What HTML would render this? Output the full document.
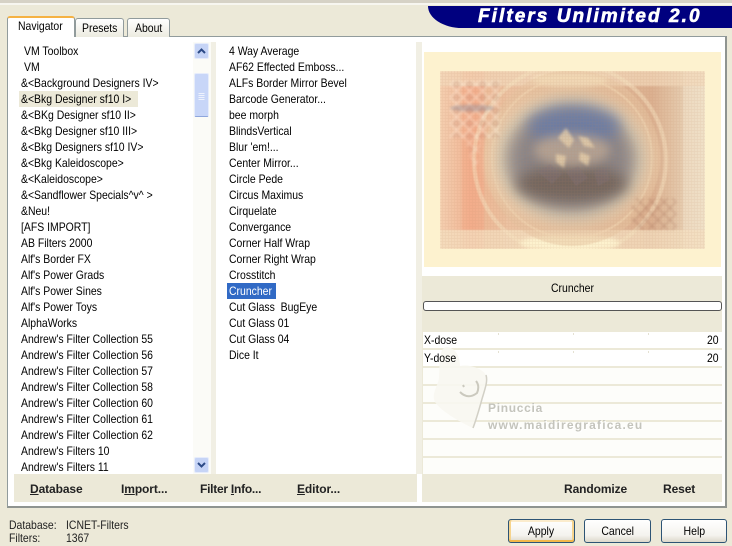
<!DOCTYPE html>
<html><head><meta charset="utf-8">
<style>
html,body{margin:0;padding:0}
body{width:732px;height:544px;position:relative;overflow:hidden;background:#ece9d8;font-family:"Liberation Sans",sans-serif;font-size:12px;color:#000}
div{position:absolute;box-sizing:border-box}
.t{white-space:nowrap;height:16px;line-height:16px;transform:scaleX(.87);transform-origin:0 0}
.l1 .t{left:21px}
.l2 .t{left:229px}
.b{font-weight:bold;white-space:nowrap;line-height:16px;color:#222;letter-spacing:-.1px}
.row{left:423px;width:299px;height:16px;background:#fdfdfa}
.btn{top:519px;height:24px;border:1px solid #2d5475;border-radius:3px;background:linear-gradient(#fff,#f4f3ee 70%,#dcd8ca);text-align:center;line-height:23px}
.btn span{display:inline-block;transform:scaleX(.875)}
.tick{width:1px;height:2px;background:#e4e1d2}
u{text-decoration:underline}
</style></head><body>
<div style="left:0;top:0;width:732px;height:3px;background:#d6d2c6"></div>
<div style="left:0;top:3px;width:732px;height:2px;background:#f7f6f0"></div>

<!-- tab panel -->
<div style="left:7px;top:36px;width:720px;height:472px;background:#fff;border:1px solid #919b9c;border-bottom:2px solid #8f9490;border-right:2px solid #8f9490"></div>

<!-- tabs -->
<div style="left:75px;top:18px;width:49px;height:19px;background:linear-gradient(#fff,#ecebe0);border:1px solid #919b9c;border-bottom:0;border-radius:3px 3px 0 0"></div>
<div style="left:127px;top:18px;width:43px;height:19px;background:linear-gradient(#fff,#ecebe0);border:1px solid #919b9c;border-bottom:0;border-radius:3px 3px 0 0"></div>
<div style="left:7px;top:16px;width:68px;height:21px;background:#fff;border:1px solid #919b9c;border-bottom:0;border-radius:3px 3px 0 0;border-top:2px solid #f5b244"></div>
<div class="t" style="left:18px;top:18px">Navigator</div>
<div class="t" style="left:82px;top:20px">Presets</div>
<div class="t" style="left:135px;top:20px">About</div>

<!-- banner -->
<div style="left:428px;top:6px;width:304px;height:22px;background:#00007f;border-radius:0 0 0 34px/0 0 0 22px"></div>
<div style="left:478px;top:6px;height:22px;line-height:22px;color:#fff;font-weight:bold;font-style:italic;font-size:19px;letter-spacing:2.05px;white-space:nowrap;-webkit-text-stroke:.6px #fff">Filters Unlimited 2.0</div>

<!-- list 1 -->
<div class="l1" style="left:0;top:0;width:0;height:0">
<div style="left:19px;top:91px;width:119px;height:16px;background:#ece9d8"></div>
<div class="t" style="left:24px;top:43px">VM Toolbox</div>
<div class="t" style="left:24px;top:59px">VM</div>
<div class="t" style="top:75px">&amp;&lt;Background Designers IV&gt;</div>
<div class="t" style="top:91px">&amp;&lt;Bkg Designer sf10 I&gt;</div>
<div class="t" style="top:107px">&amp;&lt;BKg Designer sf10 II&gt;</div>
<div class="t" style="top:123px">&amp;&lt;Bkg Designer sf10 III&gt;</div>
<div class="t" style="top:139px">&amp;&lt;Bkg Designers sf10 IV&gt;</div>
<div class="t" style="top:155px">&amp;&lt;Bkg Kaleidoscope&gt;</div>
<div class="t" style="top:171px">&amp;&lt;Kaleidoscope&gt;</div>
<div class="t" style="top:187px">&amp;&lt;Sandflower Specials^v^ &gt;</div>
<div class="t" style="top:203px">&amp;Neu!</div>
<div class="t" style="top:219px">[AFS IMPORT]</div>
<div class="t" style="top:235px">AB Filters 2000</div>
<div class="t" style="top:251px">Alf's Border FX</div>
<div class="t" style="top:267px">Alf's Power Grads</div>
<div class="t" style="top:283px">Alf's Power Sines</div>
<div class="t" style="top:299px">Alf's Power Toys</div>
<div class="t" style="top:315px">AlphaWorks</div>
<div class="t" style="top:331px">Andrew's Filter Collection 55</div>
<div class="t" style="top:347px">Andrew's Filter Collection 56</div>
<div class="t" style="top:363px">Andrew's Filter Collection 57</div>
<div class="t" style="top:379px">Andrew's Filter Collection 58</div>
<div class="t" style="top:395px">Andrew's Filter Collection 60</div>
<div class="t" style="top:411px">Andrew's Filter Collection 61</div>
<div class="t" style="top:427px">Andrew's Filter Collection 62</div>
<div class="t" style="top:443px">Andrew's Filters 10</div>
<div class="t" style="top:459px;height:15px;overflow:hidden">Andrew's Filters 11</div>
</div>

<!-- scrollbar -->
<div style="left:193px;top:42px;width:18px;height:432px;background:#fbfbf7"></div>
<div style="left:194px;top:43px;width:15px;height:16px;background:#c6d4f6;border:1px solid #e6ecfb;border-radius:2px"></div>
<svg style="position:absolute;left:194px;top:43px" width="15" height="16"><path d="M4 10l3.5-3.5L11 10" fill="none" stroke="#2c4a86" stroke-width="2"/></svg>
<div style="left:194px;top:73px;width:15px;height:44px;background:#c8d6f8;border:1px solid #e6ecfb;border-bottom:1px solid #8ea6dc;border-radius:2px"></div>
<svg style="position:absolute;left:194px;top:73px" width="15" height="44"><path d="M4.500 20.500h6M4.500 22.500h6M4.500 24.500h6M4.500 26.500h6" stroke="#eef2fd" stroke-width="1"/></svg>
<div style="left:194px;top:457px;width:15px;height:16px;background:#c6d4f6;border:1px solid #e6ecfb;border-radius:2px"></div>
<svg style="position:absolute;left:194px;top:457px" width="15" height="16"><path d="M4 6l3.500 3.500L11 6" fill="none" stroke="#2c4a86" stroke-width="2"/></svg>
<div style="left:211px;top:42px;width:5px;height:432px;background:#f1efe4"></div>

<!-- list 2 -->
<div class="l2" style="left:0;top:0;width:0;height:0">
<div style="left:227px;top:283px;width:49px;height:16px;background:#316ac5"></div>
<div class="t" style="top:43px">4 Way Average</div>
<div class="t" style="top:59px">AF62 Effected Emboss...</div>
<div class="t" style="top:75px">ALFs Border Mirror Bevel</div>
<div class="t" style="top:91px">Barcode Generator...</div>
<div class="t" style="top:107px">bee morph</div>
<div class="t" style="top:123px">BlindsVertical</div>
<div class="t" style="top:139px">Blur 'em!...</div>
<div class="t" style="top:155px">Center Mirror...</div>
<div class="t" style="top:171px">Circle Pede</div>
<div class="t" style="top:187px">Circus Maximus</div>
<div class="t" style="top:203px">Cirquelate</div>
<div class="t" style="top:219px">Convergance</div>
<div class="t" style="top:235px">Corner Half Wrap</div>
<div class="t" style="top:251px">Corner Right Wrap</div>
<div class="t" style="top:267px">Crosstitch</div>
<div class="t" style="top:283px;color:#fff">Cruncher</div>
<div class="t" style="top:299px">Cut Glass&nbsp; BugEye</div>
<div class="t" style="top:315px">Cut Glass 01</div>
<div class="t" style="top:331px">Cut Glass 04</div>
<div class="t" style="top:347px">Dice It</div>
</div>
<div style="left:416px;top:42px;width:6px;height:432px;background:#f1efe4"></div>

<!-- preview -->
<svg style="position:absolute;left:424px;top:52px" width="297" height="215" viewBox="0 0 297 215">
<defs>
<filter id="b1" x="-40%" y="-40%" width="180%" height="180%"><feGaussianBlur stdDeviation="10"/></filter>
<filter id="b5" x="-40%" y="-40%" width="180%" height="180%"><feGaussianBlur stdDeviation="7"/></filter>
<filter id="b4" x="-40%" y="-40%" width="180%" height="180%"><feGaussianBlur stdDeviation="5"/></filter>
<filter id="b2" x="-30%" y="-30%" width="160%" height="160%"><feGaussianBlur stdDeviation="2.500"/></filter>
<filter id="b3" x="-30%" y="-30%" width="160%" height="160%"><feGaussianBlur stdDeviation="1.200"/></filter>
<filter id="b0" x="-5%" y="-5%" width="110%" height="110%"><feGaussianBlur stdDeviation=".6"/></filter>
<linearGradient id="base" x1="0" x2="1" y1="0" y2="0">
<stop offset="0" stop-color="#f4cfb0"/><stop offset=".12" stop-color="#f2b392"/><stop offset=".25" stop-color="#ecc2a2"/><stop offset=".5" stop-color="#e4bd9c"/><stop offset=".8" stop-color="#dcb090"/><stop offset=".9" stop-color="#e4c8aa"/><stop offset="1" stop-color="#ecdcc0"/>
</linearGradient>
<radialGradient id="disc"><stop offset="0" stop-color="#fdf0cc"/><stop offset=".75" stop-color="#fbe9c4"/><stop offset="1" stop-color="#f2d4b0" stop-opacity="0"/></radialGradient>
<pattern id="mesh" width="3" height="3" patternUnits="userSpaceOnUse"><path d="M0 .5h3M.5 0v3" stroke="#b8835f" stroke-width=".7" opacity=".35"/></pattern>
<pattern id="lace" width="12" height="12" patternUnits="userSpaceOnUse"><path d="M0 6L6 0l6 6-6 6z" fill="none" stroke="#9c6650" stroke-width=".9"/></pattern>
<pattern id="lace2" width="13" height="13" patternUnits="userSpaceOnUse"><path d="M0 6.500L6.500 0 13 6.500 6.500 13z" fill="none" stroke="#fff4e4" stroke-width="1"/><circle cx="6.500" cy="6.500" r="2.500" fill="none" stroke="#a8786c" stroke-width=".8"/></pattern>
<clipPath id="cp"><rect x="16" y="19" width="265" height="178"/></clipPath>
</defs>
<rect width="297" height="215" fill="#fdf2cf"/>
<g clip-path="url(#cp)">
<g filter="url(#b0)">
<rect x="16" y="19" width="265" height="178" fill="url(#base)"/>
<rect x="38" y="19" width="22" height="178" fill="#f6a07a" opacity=".3"/>
<rect x="60" y="19" width="22" height="178" fill="#e8bc98" opacity=".3"/>
<rect x="259" y="19" width="22" height="178" fill="#f4e6cf" opacity=".5"/>
<rect x="16" y="19" width="265" height="15" fill="#f2d8ba" opacity=".7"/>
<rect x="16" y="178" width="265" height="19" fill="#f4dfc0" opacity=".75"/>
<circle cx="146" cy="108" r="96" fill="none" stroke="#f6e2c0" stroke-width="4" opacity=".5"/>
<ellipse cx="146" cy="28" rx="38" ry="7" fill="#fff2ce" opacity=".8" filter="url(#b2)"/>
<ellipse cx="146" cy="191" rx="50" ry="8" fill="#fff6d2" opacity=".9" filter="url(#b2)"/>
<circle cx="148" cy="106" r="88" fill="#e8c6a2" opacity=".5"/>
<circle cx="148" cy="106" r="80" fill="none" stroke="#f4d8b4" stroke-width="2" opacity=".6"/>
<ellipse cx="146" cy="107" rx="92" ry="74" fill="url(#disc)" opacity=".92"/>
<ellipse cx="147" cy="107" rx="68" ry="56" fill="#8a8486" filter="url(#b1)"/>
<ellipse cx="150" cy="74" rx="46" ry="20" fill="#667aa8" opacity=".8" filter="url(#b5)"/>
<ellipse cx="148" cy="132" rx="56" ry="18" fill="#6f6056" opacity=".85" filter="url(#b5)"/>
<ellipse cx="148" cy="98" rx="38" ry="16" fill="#b9a694" opacity=".85" filter="url(#b4)"/>
<path d="M134 86l8-10 8 12-5 8zM154 84l10 2 7 10-11-2zM132 102l10 2-2 12-8-6zM156 100l10 4-2 10-9-6z" fill="#eed6ae" opacity=".7" filter="url(#b3)"/>
<g fill="#857478" opacity=".35"><path d="M114 120l12-8 12 10-10 10zM142 120l12-6 10 12-12 8zM170 120l12-4 4 12-12 6z"/></g>
</g>
<rect x="16" y="19" width="265" height="178" fill="url(#mesh)" opacity=".3"/>
<g filter="url(#b3)">
<rect x="26" y="28" width="50" height="58" fill="url(#lace2)" opacity=".6"/>
<path d="M40 86l12 36 6-36z" fill="url(#lace2)" opacity=".4"/>
<rect x="208" y="146" width="44" height="32" fill="url(#lace)" opacity=".5"/>
</g>
<ellipse cx="48" cy="56" rx="22" ry="3.500" fill="#8c8a98" opacity=".4" filter="url(#b3)"/>
</g>
</svg>

<!-- surround strips -->
<div style="left:422px;top:276px;width:300px;height:56px;background:#ece9d8"></div>
<div class="t" style="left:551px;top:280px">Cruncher</div>
<div style="left:423px;top:301px;width:299px;height:10px;background:#fff;border:1px solid #555;border-radius:3px"></div>

<!-- param rows -->
<div style="left:422px;top:332px;width:300px;height:142px;background:#ece9d8"></div>
<div class="row" style="top:332px;background:#fff"></div>
<div class="row" style="top:350px;background:#fff"></div>
<div class="row" style="top:368px"></div>
<div class="row" style="top:386px"></div>
<div class="row" style="top:404px"></div>
<div class="row" style="top:422px"></div>
<div class="row" style="top:440px"></div>
<div class="row" style="top:458px"></div>
<div class="tick" style="left:498px;top:333px"></div><div class="tick" style="left:573px;top:333px"></div><div class="tick" style="left:648px;top:333px"></div>
<div class="tick" style="left:498px;top:351px"></div><div class="tick" style="left:573px;top:351px"></div><div class="tick" style="left:648px;top:351px"></div>

<!-- watermark -->
<svg style="position:absolute;left:430px;top:342px" width="62" height="92" viewBox="0 0 62 92">
<path d="M17 5c9 1 13 10 13 19 8-2 22 2 26 9 2 6-1 14-4 24-3 11-6 21-9 29C30 80 12 70 5 60 1 52 8 44 9 36 10 22 8 6 17 5z" fill="#f8f7f1" opacity=".9"/>
<path d="M56 33c2 6-1 14-4 24-3 11-6 21-9 29" fill="none" stroke="#d2d0c6" stroke-width="1.500"/>
<path d="M30 50q8 8 17 1q3-7-1-12M33 43l1 2" fill="none" stroke="#cbc9be" stroke-width="2"/>
</svg>
<div style="left:488px;top:401px;font-weight:bold;font-size:12px;color:#c4c4bc;white-space:nowrap;line-height:14px;letter-spacing:.7px;text-shadow:1px 1px 0 #fff">Pinuccia</div>
<div style="left:488px;top:418px;font-weight:bold;font-size:12px;color:#c4c4bc;white-space:nowrap;line-height:14px;letter-spacing:1.2px;text-shadow:1px 1px 0 #fff">www.maidiregrafica.eu</div>

<!-- bottom button strips -->
<div style="left:14px;top:474px;width:403px;height:28px;background:#ece9d8"></div>
<div style="left:422px;top:474px;width:300px;height:28px;background:#ece9d8"></div>
<div class="b" style="left:30px;top:481px"><u>D</u>atabase</div>
<div class="b" style="left:121px;top:481px">I<u>m</u>port...</div>
<div class="b" style="left:200px;top:481px;letter-spacing:-.25px">Filter <u>I</u>nfo...</div>
<div class="b" style="left:297px;top:481px"><u>E</u>ditor...</div>
<div class="b" style="left:564px;top:481px">Randomize</div>
<div class="b" style="left:663px;top:481px">Reset</div>

<!-- status -->
<div class="t" style="left:9px;top:517px;color:#222">Database:</div>
<div class="t" style="left:66px;top:517px;color:#222">ICNET-Filters</div>
<div class="t" style="left:9px;top:530px;color:#222">Filters:</div>
<div class="t" style="left:66px;top:530px;color:#222">1367</div>
<div class="t" style="left:424px;top:332px">X-dose</div>
<div class="t" style="left:707px;top:332px">20</div>
<div class="t" style="left:424px;top:350px">Y-dose</div>
<div class="t" style="left:707px;top:350px">20</div>

<!-- dialog buttons -->
<div class="btn" style="left:508px;width:67px;box-shadow:inset 0 -2px 0 #f2b84a,inset 2px 0 0 #f6d48e,inset -2px 0 0 #f6d48e,inset 0 2px 0 #fbeccd"><span>Apply</span></div>
<div class="btn" style="left:584px;width:67px"><span>Cancel</span></div>
<div class="btn" style="left:661px;width:66px"><span>Help</span></div>
</body></html>
